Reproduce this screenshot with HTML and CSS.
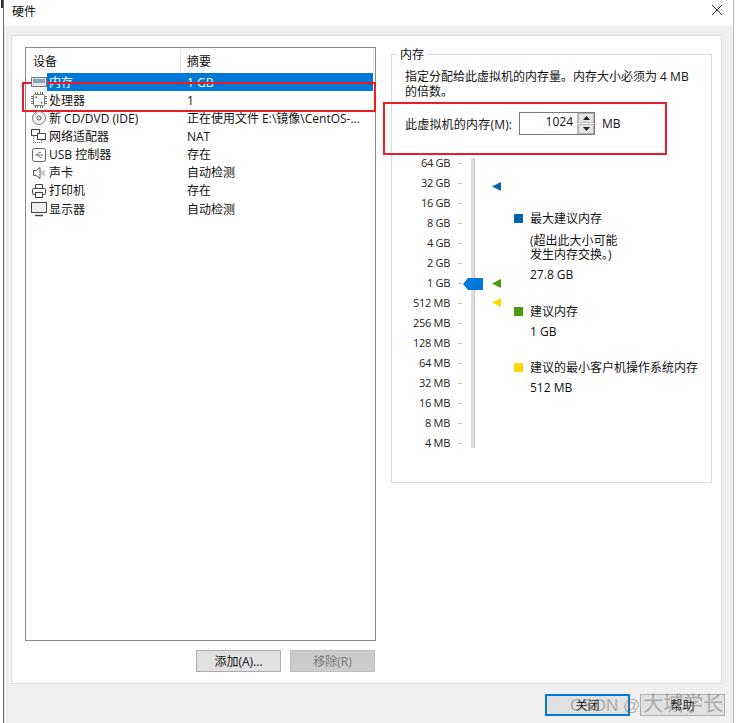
FILE: index.html
```html
<!DOCTYPE html>
<html lang="zh">
<head>
<meta charset="utf-8">
<title>硬件</title>
<link rel="stylesheet" href="styles.css">
</head>
<body>
<div class="window">
  <span class="edge-glyph"></span>
  <header class="titlebar">
    <span class="title">硬件</span>
    <svg class="close" width="12" height="12" viewBox="0 0 12 12"><path d="M1 1L11 11M11 1L1 11" stroke="#333" stroke-width="1" fill="none"/></svg>
  </header>
  <div class="content">
    <main class="panel">
      <section class="left">
        <div class="list">
          <div class="list-head"><div class="col-a">设备</div><div class="col-b">摘要</div></div>
          <div class="row selected">
            <svg class="icon" viewBox="0 0 16 16"><rect x="0.5" y="3.500" width="15" height="9" fill="#dfe6ee" stroke="#6d7a88"/><rect x="2" y="5" width="12" height="4" fill="#8ea3b8"/></svg>
            <div class="col-a"><span class="sel">内存</span></div><div class="col-b sel">1 GB</div>
          </div>
          <div class="row">
            <svg class="icon" viewBox="0 0 16 16"><path d="M4.500 0V16M6.500 0V16M9.500 0V16M11.500 0V16M0 4.500H16M0 6.500H16M0 9.500H16M0 11.500H16" stroke="#6f6f6f"/><rect x="2.500" y="2.500" width="11" height="11" rx="1" fill="#fff" stroke="#777"/><rect x="4.500" y="4.500" width="1.500" height="1.500" fill="#444"/><rect x="10" y="10" width="1.500" height="1.500" fill="#444"/></svg>
            <div class="col-a">处理器</div><div class="col-b">1</div>
          </div>
          <div class="row">
            <svg class="icon" viewBox="0 0 16 16"><circle cx="8" cy="8" r="6.500" fill="#f3f3f3" stroke="#777"/><circle cx="8" cy="8" r="2" fill="#fff" stroke="#555"/><path d="M4 5.500A5 5 0 0 1 6 3.500" stroke="#aaa" fill="none"/></svg>
            <div class="col-a">新 CD/DVD (IDE)</div><div class="col-b">正在使用文件 E:\镜像\CentOS-...</div>
          </div>
          <div class="row">
            <svg class="icon" viewBox="0 0 16 16"><rect x="0.500" y="1.500" width="8" height="6" fill="#fff" stroke="#444"/><rect x="6.500" y="5.500" width="8" height="6" fill="#fff" stroke="#444"/><path d="M2.500 8V14.500H9M10.500 12V15" stroke="#666" stroke-dasharray="1 1" fill="none"/></svg>
            <div class="col-a">网络适配器</div><div class="col-b">NAT</div>
          </div>
          <div class="row">
            <svg class="icon" viewBox="0 0 16 16"><rect x="1.500" y="1.500" width="13" height="13" rx="2" fill="#fff" stroke="#666"/><path d="M4 8H12M6 8L8 5.500H10M7 8L9 10.500H10.500" stroke="#777" fill="none"/></svg>
            <div class="col-a">USB 控制器</div><div class="col-b">存在</div>
          </div>
          <div class="row">
            <svg class="icon" viewBox="0 0 16 16"><path d="M2.500 5.500H5L9 2.500V13.500L5 10.500H2.500Z" fill="#fff" stroke="#555"/><path d="M11 6V10M13 5V11" stroke="#999" fill="none"/></svg>
            <div class="col-a">声卡</div><div class="col-b">自动检测</div>
          </div>
          <div class="row">
            <svg class="icon" viewBox="0 0 16 16"><path d="M4.500 5V1.500H11.500V5" fill="#fff" stroke="#444"/><rect x="1.500" y="5.500" width="13" height="6" rx="1" fill="#fff" stroke="#444"/><rect x="4.500" y="9.500" width="7" height="5" fill="#fff" stroke="#444"/></svg>
            <div class="col-a">打印机</div><div class="col-b">存在</div>
          </div>
          <div class="row">
            <svg class="icon" viewBox="0 0 16 16"><rect x="0.500" y="1.500" width="15" height="10" fill="#eef1f4" stroke="#444"/><path d="M4 14.500H12" stroke="#444" stroke-width="1.500"/></svg>
            <div class="col-a">显示器</div><div class="col-b">自动检测</div>
          </div>
        </div>
        <div class="list-actions">
          <button class="btn">添加(A)...</button>
          <button class="btn disabled">移除(R)</button>
        </div>
      </section>
      <fieldset class="group">
        <legend>内存</legend>
        <p class="desc">指定分配给此虚拟机的内存量。内存大小必须为 4 MB<br>的倍数。</p>
        <div class="spin-row">
          <span class="spin-label">此虚拟机的内存(M):</span>
          <div class="spin">
            <span class="spin-value">1024</span>
            <div class="spin-btns">
              <span class="spin-btn"><svg width="7" height="4" viewBox="0 0 7 4"><path d="M3.500 0L7 4H0Z" fill="#222"/></svg></span>
              <span class="spin-btn"><svg width="7" height="4" viewBox="0 0 7 4"><path d="M0 0H7L3.500 4Z" fill="#222"/></svg></span>
            </div>
          </div>
          <span class="spin-unit">MB</span>
        </div>
        <div class="scale-area">
          <ul class="scale">
            <li>64 GB</li><li>32 GB</li><li>16 GB</li><li>8 GB</li><li>4 GB</li><li>2 GB</li><li>1 GB</li><li>512 MB</li><li>256 MB</li><li>128 MB</li><li>64 MB</li><li>32 MB</li><li>16 MB</li><li>8 MB</li><li>4 MB</li>
          </ul>
          <div class="track">
            <svg class="thumb" width="20" height="12" viewBox="0 0 20 12"><path d="M5 0H20V12H5L0 6Z" fill="#0078d7"/></svg>
            <svg class="mark mark-max" width="9" height="9" viewBox="0 0 9 9"><path d="M9 0L0 4.500L9 9Z" fill="#0063b1"/></svg>
            <svg class="mark mark-rec" width="9" height="9" viewBox="0 0 9 9"><path d="M9 0L0 4.500L9 9Z" fill="#4a9a0a"/></svg>
            <svg class="mark mark-min" width="9" height="9" viewBox="0 0 9 9"><path d="M9 0L0 4.500L9 9Z" fill="#ffd800"/></svg>
          </div>
          <div class="legend-list">
            <div class="key key-max">
              <div class="key-title"><i class="sw sw-blue"></i>最大建议内存</div>
              <div class="key-note">(超出此大小可能<br>发生内存交换。)</div>
              <div class="key-value">27.8 GB</div>
            </div>
            <div class="key key-rec">
              <div class="key-title"><i class="sw sw-green"></i>建议内存</div>
              <div class="key-value">1 GB</div>
            </div>
            <div class="key key-min">
              <div class="key-title"><i class="sw sw-yellow"></i>建议的最小客户机操作系统内存</div>
              <div class="key-value">512 MB</div>
            </div>
          </div>
        </div>
      </fieldset>
    </main>
    <footer class="footer">
      <button class="btn primary">关闭</button>
      <button class="btn">帮助</button>
    </footer>
  </div>
  <div class="annot annot-a"></div>
  <div class="annot annot-b"></div>
  <div class="watermark"><span class="wm-latin">CSDN @</span>大城学长</div>
</div>
</body>
</html>
```
FILE: styles.css
```css
* { box-sizing: border-box; }
html, body { margin: 0; padding: 0; background: #fff; }
body { font: 12px/15px "Open Sans", "Noto Sans CJK SC", sans-serif; color: #111; overflow: hidden; }
.window { position: relative; width: 731px; height: 723px; margin-left: 3px; border-left: 1px solid #666; border-right: 1px solid #bbb; display: flex; flex-direction: column; }
.edge-glyph { position: absolute; left: -3px; top: 0; width: 2px; height: 8px; background: #333; }
.titlebar { height: 26px; flex: none; display: flex; align-items: center; justify-content: space-between; padding: 0 10px 6px 8px; background: #fff; }
.title { font-size: 12px; padding-top: 2px; }
.content { flex: 1; background: #f0f0f0; display: flex; flex-direction: column; padding: 9px 11px 0 7px; }
.panel { height: 649px; background: #fff; border: 1px solid #dcdcdc; display: flex; padding: 11px 9px 0 13px; }
.left { width: 351px; flex: none; display: flex; flex-direction: column; }
.list { height: 594px; border: 1px solid #868a91; background: #fff; padding: 1px 1px 0 0; }
.list-head { display: flex; height: 24px; align-items: center; margin-bottom: 0; }
.list-head .col-a { width: 155px; padding: 1px 0 0 7px; height: 24px; line-height: 24px; border-right: 1px solid #e3e3e3; }
.list-head .col-b { flex: none; width: 193px; padding: 1px 0 0 6px; height: 24px; line-height: 24px; border-right: 1px solid #e3e3e3; }
.row { display: flex; height: 18.15px; align-items: center; line-height: 18px; padding-left: 5px; position: relative; }
.row .icon { width: 16px; height: 16px; flex: none; margin-right: 2px; position: relative; z-index: 1; }
.row .col-a { width: 132px; white-space: nowrap; padding-top: 1px; }
.row .col-b { padding-left: 6px; white-space: nowrap; padding-top: 1px; }
.selected { color: #fff; }
.selected::before { content: ""; position: absolute; left: 21px; right: 1px; top: 0; bottom: 0; background: #0078d7; }
.sel { position: relative; }
.list-actions { display: flex; justify-content: flex-end; gap: 9px; margin-top: 9px; padding-right: 1px; }
.btn { width: 85px; height: 22px; border: 1px solid #adadad; background: #e1e1e1; font: inherit; color: #111; padding: 0; }
.btn.disabled { background: #cccccc; border-color: #bfbfbf; color: #787878; }
.btn.primary { border: 2px solid #0078d7; }
.group { margin: 0 0 0 15px; width: 321px; height: 436px; border: 1px solid #dcdcdc; padding: 7px 0 0 13px; min-width: 0; }
.group legend { padding: 0 3px; margin-left: -8px; line-height: 15px; }
.desc { margin: 0; line-height: 15px; }
.spin-row { display: flex; align-items: center; margin-top: 13px; height: 23px; }
.spin-label { width: 114px; flex: none; line-height: 24px; padding-top: 2px; letter-spacing: 0.2px; white-space: nowrap; }
.spin { width: 76px; height: 23px; border: 1px solid #7a7a7a; display: flex; background: #fff; }
.spin-value { flex: 1; text-align: right; padding-right: 4px; line-height: 18px; }
.spin-btns { width: 17px; display: flex; flex-direction: column; gap: 1px; background: #fff; border-left: 1px solid #bbb; }
.spin-btn { flex: 1; background: #e4e4e4; border: 1px solid #b5b5b5; display: flex; align-items: center; justify-content: center; }
.spin-unit { margin-left: 7px; }
.scale-area { display: flex; margin-top: 23px; position: relative; height: 290px; }
.scale { list-style: none; margin: -1px 0 0 -13px; padding: 0; width: 70px; flex: none; }
.scale li { height: 20px; line-height: 12px; padding-right: 12px; text-align: right; position: relative; font-size: 11px; letter-spacing: -0.3px; color: #222; }
.scale li::after { content: ""; position: absolute; right: 0; top: 6px; width: 4px; height: 1px; background: #bdbdbd; }
.track { width: 4px; flex: none; margin-left: 9px; height: 290px; background: #dcdedd; border-right: 1px solid #c9c9c9; position: relative; }
.thumb { position: absolute; left: -8px; top: 120px; }
.mark { position: absolute; left: 21px; }
.mark-max { top: 24px; }
.mark-rec { top: 121px; }
.mark-min { top: 140px; }
.legend-list { margin-left: 39px; padding-top: 52px; }
.key-title { position: relative; padding-left: 16px; line-height: 18px; white-space: nowrap; }
.sw { position: absolute; left: 0; top: 4px; width: 9px; height: 9px; }
.sw-blue { background: #0063b1; }
.sw-green { background: #4a9a0a; }
.sw-yellow { background: #ffd800; }
.key-note { padding-left: 16px; margin-top: 6px; line-height: 14px; }
.key-value { padding-left: 16px; margin-top: 5px; line-height: 15px; }
.key-rec { margin-top: 21px; }
.key-min { margin-top: 20px; }
.key-rec .key-value, .key-min .key-value { margin-top: 3px; }
.footer { display: flex; justify-content: flex-end; gap: 10px; padding-top: 10px; margin-right: -3px; }
.annot { position: absolute; border: 2px solid #ed1c24; pointer-events: none; }
.annot-a { left: 18px; top: 82px; width: 354px; height: 30px; }
.annot-b { left: 379px; top: 102px; width: 284px; height: 53px; }
.watermark { position: absolute; left: 566px; top: 692px; font: 20px/24px "Liberation Sans", "Noto Sans CJK SC", sans-serif; color: rgba(120, 120, 120, 0.55); white-space: nowrap; }
.wm-latin { font-size: 17px; margin-right: 3px; }
```
